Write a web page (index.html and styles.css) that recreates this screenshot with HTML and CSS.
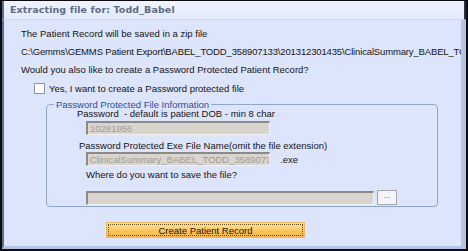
FILE: index.html
```html
<!DOCTYPE html>
<html lang="en">
<head>
  <meta charset="UTF-8">
  <title>Extracting file</title>
  <link rel="stylesheet" href="styles.css">
</head>
<body>
  <div class="window">
    <div class="titlebar">Extracting file for: Todd_Babel</div>
    <div class="content">
      <p class="line">The Patient Record will be saved in a zip file</p>
      <p class="line path">C:\Gemms\GEMMS Patient Export\BABEL_TODD_358907133\201312301435\ClinicalSummary_BABEL_TODD_358907133.zip</p>
      <p class="line">Would you also like to create a Password Protected Patient Record?</p>

      <label class="check-row">
        <span class="checkbox"></span>
        Yes, I want to create a Password protected file
      </label>

      <fieldset class="group">
        <legend>Password Protected File Information</legend>
        <div class="group-body">
          <div class="field-label pw-label">Password &nbsp;- default is patient DOB - min 8 char</div>
          <div class="textbox short">10281956</div>
          <div class="field-label exe-label">Password Protected Exe File Name(omit the file extension)</div>
          <div class="exe-row">
            <div class="textbox short">ClinicalSummary_BABEL_TODD_358907133</div>
            <span class="ext">.exe</span>
          </div>
          <div class="field-label save-label">Where do you want to save the file?</div>
          <div class="save-row">
            <div class="textbox long"></div>
            <div class="browse">...</div>
          </div>
        </div>
      </fieldset>

      <div class="actions">
        <button class="create-btn"><span>Create Patient Record</span></button>
      </div>
    </div>
  </div>
</body>
</html>
```

FILE: styles.css
```css
body {
  margin: 0;
  background: #fff;
  font-family: "Liberation Sans", Arial, sans-serif;
}

.window {
  width: 468px;
  height: 251px;
  box-sizing: border-box;
  border: 2px solid #0c0c10;
  border-top-width: 1px;
  background: #dde5fc;
  overflow: hidden;
  display: flex;
  flex-direction: column;
}

.titlebar {
  height: 19px;
  box-sizing: border-box;
  padding: 3px 0 0 6px;
  border-left: 2px solid #5d6d8a;
  border-right: 2px solid #27304a;
  background: linear-gradient(#eef3fe, #e2eafc);
  border-bottom: 1px solid #cfd9f2;
  color: #5d6b84;
  font-family: "DejaVu Sans", sans-serif;
  font-weight: bold;
  font-size: 9.5px;
  letter-spacing: 0.1px;
}

.content {
  flex: 1;
  border-left: 2px solid #5d6d8a;
  border-right: 5px solid #b4c4e4;
  border-bottom: 3px solid #b4c4e4;
  padding: 0 0 0 17px;
  font-size: 9.5px;
  color: #141414;
  overflow: hidden;
}

.line {
  margin: 0;
  height: 18px;
  line-height: 18px;
  white-space: nowrap;
  overflow: hidden;
}
.line:first-child {
  margin-top: 5px;
}
.path {
  letter-spacing: -0.15px;
}

.check-row {
  display: flex;
  align-items: center;
  gap: 4px;
  margin: 3px 0 0 13px;
  height: 12px;
}

.checkbox {
  width: 11px;
  height: 11px;
  background: #fff;
  border: 1px solid #8a97ae;
  box-sizing: border-box;
}

.group {
  margin: 6px 0 0 25px;
  width: 392px;
  box-sizing: border-box;
  border: 1px solid #8fa6cf;
  border-radius: 4px;
  padding: 0 0 1px 0;
  min-inline-size: 0;
}

.group legend {
  color: #1f4fa0;
  padding: 0 2px;
  margin-left: 7px;
  line-height: 9px;
}

.group-body {
  padding-left: 30px;
}

.field-label {
  white-space: nowrap;
  line-height: 12px;
}
.pw-label {
  line-height: 10px;
  margin: 0 0 2px 0;
}
.exe-label { margin: 5px 0 0 2px; }
.save-label { margin: 3px 0 9px 9px; }

.textbox {
  box-sizing: border-box;
  height: 14px;
  background: #d9d4cd;
  border-top: 2px solid #8c8a88;
  border-left: 2px solid #8c8a88;
  border-bottom: 1px solid #f2f0ec;
  border-right: 1px solid #f2f0ec;
  color: #a09c97;
  line-height: 11px;
  padding-left: 2px;
  overflow: hidden;
  white-space: nowrap;
  margin-left: 9px;
}
.short { width: 184px; }
.long { width: 288px; }

.exe-row,
.save-row {
  display: flex;
  align-items: center;
}
.ext {
  margin-left: 10px;
}

.browse {
  margin-left: 3px;
  width: 20px;
  height: 15px;
  box-sizing: border-box;
  border: 1px solid #a7a7a7;
  background: #f4f5fa;
  font-size: 8px;
  color: #555;
  text-align: center;
  line-height: 9px;
}

.actions {
  margin: 15px 0 0 85px;
}

.create-btn {
  width: 199px;
  height: 16px;
  padding: 1px;
  border: 1px solid #f0b860;
  background: linear-gradient(#ffe2a0, #fcc45c 60%, #f7b445);
  font: inherit;
  color: #141414;
  display: block;
}
.create-btn span {
  display: block;
  height: 100%;
  box-sizing: border-box;
  border: 1px dotted #6a5020;
  line-height: 11px;
}
```
